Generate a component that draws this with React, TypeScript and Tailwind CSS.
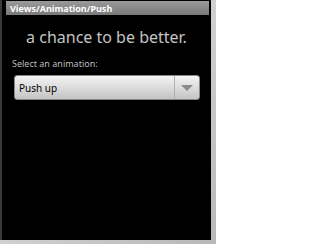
export default function App() {
  return (
    <div className="w-[216px] h-[244px] bg-gradient-to-br from-[#e8e8e8] to-[#b8b8b8] font-['Noto_Sans',sans-serif]">
      <div className="w-[211px] h-[240px] bg-black border-l-2 border-[#3a3a3a] flex flex-col">
        {/* Title bar */}
        <div className="mt-px ml-[4px] mr-[2px] h-[14px] bg-gradient-to-b from-[#9a9a9a] to-[#7a7a7a] flex items-center pl-[4px]">
          <span className="text-[9px] font-bold text-white leading-none">Views/Animation/Push</span>
        </div>

        <div className="text-center text-[16px] text-[#c4c4c4] leading-none mt-[14px]">
          a chance to be better.
        </div>

        <div className="mt-[14px] ml-[10px] text-[9px] text-[#bdbdbd] leading-none">
          Select an animation:
        </div>

        {/* Spinner */}
        <div className="mt-[7px] ml-[12px] w-[186px] h-[25px] rounded-[3px] bg-gradient-to-b from-[#f4f4f4] via-[#dcdcdc] to-[#c4c4c4] flex items-center border border-[#888]">
          <span className="flex-1 pl-[4px] text-[10px] text-black leading-none">Push up</span>
          <div className="w-[25px] h-full border-l border-[#b0b0b0] flex items-center justify-center">
            <svg width="12" height="6" viewBox="0 0 12 6">
              <polygon points="0,0 12,0 6,6" fill="#8a8a8a" />
            </svg>
          </div>
        </div>
      </div>
    </div>
  )
}
